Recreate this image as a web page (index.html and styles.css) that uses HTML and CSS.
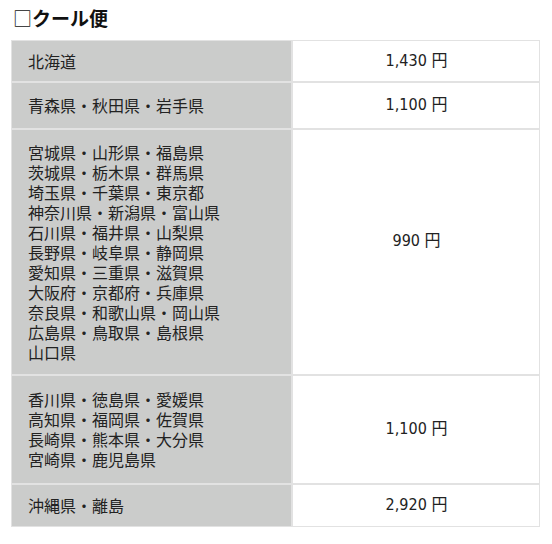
FILE: index.html
```html
<!DOCTYPE html>
<html lang="ja">
<head>
<meta charset="utf-8">
<link rel="stylesheet" href="styles.css">
</head>
<body>
<div class="page">
  <h2 class="title"><span class="box">□</span>クール便</h2>
  <table class="fees">
    <tr class="r1">
      <td class="area">北海道</td>
      <td class="price">1,430 円</td>
    </tr>
    <tr class="r2">
      <td class="area">青森県・秋田県・岩手県</td>
      <td class="price">1,100 円</td>
    </tr>
    <tr class="r3">
      <td class="area">宮城県・山形県・福島県<br>茨城県・栃木県・群馬県<br>埼玉県・千葉県・東京都<br>神奈川県・新潟県・富山県<br>石川県・福井県・山梨県<br>長野県・岐阜県・静岡県<br>愛知県・三重県・滋賀県<br>大阪府・京都府・兵庫県<br>奈良県・和歌山県・岡山県<br>広島県・鳥取県・島根県<br>山口県</td>
      <td class="price lifted">990 円</td>
    </tr>
    <tr class="r4">
      <td class="area">香川県・徳島県・愛媛県<br>高知県・福岡県・佐賀県<br>長崎県・熊本県・大分県<br>宮崎県・鹿児島県</td>
      <td class="price">1,100 円</td>
    </tr>
    <tr class="r5">
      <td class="area">沖縄県・離島</td>
      <td class="price">2,920 円</td>
    </tr>
  </table>
</div>
</body>
</html>
```

FILE: styles.css
```css
html, body {
  margin: 0;
  padding: 0;
  background: #ffffff;
}

.page {
  padding: 6px 12px 0 11px;
  font-family: "DejaVu Sans Condensed", "DejaVu Sans", "Noto Sans CJK JP", sans-serif;
  color: #222222;
}

.title {
  margin: 0 0 10px 2px;
  font-family: "Noto Sans CJK JP", sans-serif;
  font-size: 19px;
  line-height: 24px;
  font-weight: 700;
  color: #111111;
}

.title .box {
  font-weight: 400;
}

.fees {
  width: 100%;
  border-collapse: separate;
  border-spacing: 0;
}

.fees td {
  border: 1px solid #e2e2e2;
  font-size: 16px;
  line-height: 20px;
  padding: 10px 15px 10px 16px;
  vertical-align: middle;
}

.area {
  width: 248px;
  background: #cbcccb;
  font-family: "Noto Sans CJK JP", sans-serif;
  font-size: 16px;
}

.price {
  background: #ffffff;
  text-align: center;
  font-size: 15px;
}

.r2 td { padding-top: 12px; padding-bottom: 13px; }
.r3 td { padding-top: 12px; padding-bottom: 12px; }
.r3 td.lifted { padding-bottom: 34px; }
.r4 td { padding-top: 13px; padding-bottom: 14px; }
.r5 td { padding-top: 10px; padding-bottom: 11px; }
```
